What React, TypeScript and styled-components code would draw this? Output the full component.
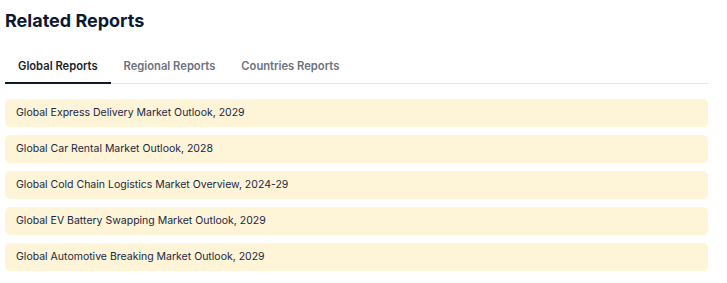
import { useState } from 'react'
import styled, { createGlobalStyle } from 'styled-components'

const GlobalStyle = createGlobalStyle`
  html, body {
    margin: 0;
    padding: 0;
    background: #ffffff;
  }
  body {
    font-family: Inter, "Noto Sans", "Liberation Sans", sans-serif;
  }
`

const Section = styled.section`
  width: 703px;
  padding: 9px 0 0 5px;
`

const Title = styled.h2`
  margin: 0;
  font-size: 18px;
  line-height: 24px;
  font-weight: 700;
  color: #0b1a33;
`

const TabBar = styled.div`
  display: flex;
  margin-top: 17px;
  border-bottom: 1px solid #e5e5e5;
`

const Tab = styled.button<{ $active?: boolean }>`
  font-family: inherit;
  background: none;
  border: none;
  margin: 0 0 -1px;
  padding: 8px 13px 8px;
  font-size: 11.2px;
  line-height: 16px;
  font-weight: 600;
  color: ${(p) => (p.$active ? '#1a1f2b' : '#6b7280')};
  border-bottom: 2px solid ${(p) => (p.$active ? '#0b1a33' : 'transparent')};
  cursor: pointer;
`

const List = styled.div`
  display: flex;
  flex-direction: column;
  gap: 8px;
  margin-top: 15px;
`

const Item = styled.a`
  display: block;
  height: 28px;
  line-height: 28px;
  padding: 0 11px;
  background: #fef4d8;
  border-radius: 5px;
  font-size: 10.5px;
  color: #1b2740;
  text-decoration: none;
`

const tabs = ['Global Reports', 'Regional Reports', 'Countries Reports']

const reports = [
  'Global Express Delivery Market Outlook, 2029',
  'Global Car Rental Market Outlook, 2028',
  'Global Cold Chain Logistics Market Overview, 2024-29',
  'Global EV Battery Swapping Market Outlook, 2029',
  'Global Automotive Breaking Market Outlook, 2029',
]

export default function App() {
  const [active, setActive] = useState(0)

  return (
    <>
      <GlobalStyle />
      <Section>
        <Title>Related Reports</Title>
        <TabBar>
          {tabs.map((t, i) => (
            <Tab key={t} $active={i === active} onClick={() => setActive(i)}>
              {t}
            </Tab>
          ))}
        </TabBar>
        <List>
          {reports.map((r) => (
            <Item key={r} href="#">
              {r}
            </Item>
          ))}
        </List>
      </Section>
    </>
  )
}
